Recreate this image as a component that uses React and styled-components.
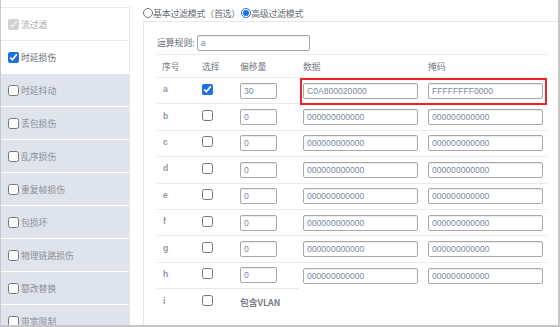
import React from "react";
import styled, { createGlobalStyle } from "styled-components";

const Global = createGlobalStyle`
  html, body { margin: 0; padding: 0; background: #fff; }
  body { font-family: "Liberation Sans", "Noto Sans CJK SC", sans-serif; }
  * { box-sizing: border-box; }
`;

const Frame = styled.div`
  width: 560px;
  height: 327px;
  display: flex;
  border-left: 1px solid #c8c8c8;
  border-right: 2px solid #c6c6c6;
  border-bottom: 2px solid #c6c6c6;
  overflow: hidden;
  background: #fff;
`;

const Sidebar = styled.div`
  width: 129px;
  flex: none;
  margin-top: 7px;
  border-top: 1px solid #ececec;
  border-right: 1px solid #e8e8e8;
  display: flex;
  flex-direction: column;
`;

const SideItem = styled.label`
  flex: none;
  height: 33px;
  display: flex;
  align-items: center;
  gap: 2px;
  padding-left: 7px;
  background: ${(p) => (p.$active ? "#ffffff" : "#dfe3eb")};
  border-bottom: 1px solid ${(p) => (p.$plain ? "#ececec" : "#ffffff")};
  color: ${(p) => (p.$disabled ? "#aaaaaa" : p.$active ? "#666a72" : "#8a8f98")};
  font-family: "Noto Sans CJK SC", sans-serif;
  font-size: 8.8px;
`;

const Check = styled.input.attrs({ type: "checkbox" })`
  width: 11px;
  height: 11px;
  margin: 0;
  accent-color: #1d6fe3;
  flex: none;
`;

const Main = styled.div`
  flex: 1;
  display: flex;
  flex-direction: column;
  padding-left: 13px;
  min-width: 0;
`;

const ModeRow = styled.div`
  height: 21px;
  display: flex;
  align-items: center;
  padding-top: 5px;
  font-family: "Noto Sans CJK SC", sans-serif;
  font-size: 9px;
  letter-spacing: -0.3px;
  color: #6a6e76;
`;

const ModeOption = styled.label`
  display: flex;
  align-items: center;
  margin-right: 1px;
`;

const Radio = styled.input.attrs({ type: "radio" })`
  width: 10px;
  height: 10px;
  margin: 0;
  accent-color: #1d6fe3;
`;

const Panel = styled.div`
  flex: 1;
  border: 1px solid #e6e6e6;
  border-right: none;
  border-bottom: none;
  padding: 12px 10px 0 13px;
`;

const RuleRow = styled.div`
  display: flex;
  align-items: center;
  gap: 2px;
  height: 17px;
  font-family: "Noto Sans CJK SC", sans-serif;
  font-size: 8.8px;
  color: #6a6e76;
`;

const Field = styled.input`
  width: ${(p) => p.$w}px;
  height: 16px;
  margin: 0;
  padding: 0 3px;
  border: 1px solid #a8a8a8;
  border-radius: 2px;
  box-shadow: inset 0 1px 1px rgba(0, 0, 0, 0.08);
  font-family: "Liberation Sans", sans-serif;
  font-size: 8.6px;
  color: #7a88a3;
  background: #fff;
  outline: none;
`;

const Table = styled.table`
  margin-top: 3px;
  width: 390px;
  border-collapse: collapse;
  table-layout: fixed;
  font-family: "Noto Sans CJK SC", sans-serif;
  font-size: 8.8px;
`;

const Col = styled.col`
  width: ${(p) => p.$w}px;
`;

const Th = styled.th`
  height: 23px;
  padding: 0 0 0 5px;
  text-align: left;
  font-weight: normal;
  color: #777b83;
  border-top: 1px solid #ebebeb;
`;

const Td = styled.td`
  height: 26.4px;
  padding: 0 0 0 5px;
  vertical-align: middle;
  border-top: ${(p) => (p.$noLine ? "none" : "1px solid #e9e9e9")};
  position: ${(p) => (p.$mark ? "relative" : "static")};
`;

const Letter = styled.span`
  font-family: "Liberation Sans", sans-serif;
  font-weight: bold;
  font-size: 8.6px;
  color: #8f98a9;
  position: relative;
  top: -2px;
  padding-left: 1px;
`;

const Vlan = styled.span`
  font-weight: bold;
  color: #7a7e86;
  font-size: 8.8px;
`;

const Highlight = styled.div`
  position: absolute;
  left: 2px;
  top: 0;
  width: 247px;
  height: 27px;
  border: 2px solid #e8262b;
  pointer-events: none;
`;

const sideItems = [
  "时延抖动",
  "丢包损伤",
  "乱序损伤",
  "重复帧损伤",
  "包损坏",
  "物理链路损伤",
  "篡改替换",
  "带宽限制",
];

const rows = ["b", "c", "d", "e", "f", "g", "h"];

export default function App() {
  return (
    <>
      <Global />
      <Frame>
        <Sidebar>
          <SideItem $active $plain $disabled>
            <Check defaultChecked disabled />
            流过滤
          </SideItem>
          <SideItem $active>
            <Check defaultChecked />
            时延损伤
          </SideItem>
          {sideItems.map((s) => (
            <SideItem key={s}>
              <Check />
              {s}
            </SideItem>
          ))}
        </Sidebar>
        <Main>
          <ModeRow>
            <ModeOption>
              <Radio name="mode" />
              基本过滤模式（首选）
            </ModeOption>
            <ModeOption>
              <Radio name="mode" defaultChecked />
              高级过滤模式
            </ModeOption>
          </ModeRow>
          <Panel>
            <RuleRow>
              运算规则:
              <Field $w={113} defaultValue="a" />
            </RuleRow>
            <Table>
              <colgroup>
                <Col $w={40} />
                <Col $w={38} />
                <Col $w={63} />
                <Col $w={125} />
                <Col $w={124} />
              </colgroup>
              <thead>
                <tr>
                  <Th>序号</Th>
                  <Th>选择</Th>
                  <Th>偏移量</Th>
                  <Th>数据</Th>
                  <Th>掩码</Th>
                </tr>
              </thead>
              <tbody>
                <tr>
                  <Td><Letter>a</Letter></Td>
                  <Td><Check defaultChecked /></Td>
                  <Td><Field $w={37} defaultValue="30" /></Td>
                  <Td $mark>
                    <Field $w={115} defaultValue="C0A800020000" />
                    <Highlight />
                  </Td>
                  <Td><Field $w={115} defaultValue="FFFFFFFF0000" /></Td>
                </tr>
                {rows.map((r) => (
                  <tr key={r}>
                    <Td><Letter>{r}</Letter></Td>
                    <Td><Check /></Td>
                    <Td><Field $w={37} defaultValue="0" /></Td>
                    <Td><Field $w={115} defaultValue="000000000000" /></Td>
                    <Td><Field $w={115} defaultValue="000000000000" /></Td>
                  </tr>
                ))}
                <tr>
                  <Td><Letter>i</Letter></Td>
                  <Td><Check /></Td>
                  <Td><Vlan>包含VLAN</Vlan></Td>
                  <Td $noLine />
                  <Td $noLine />
                </tr>
              </tbody>
            </Table>
          </Panel>
        </Main>
      </Frame>
    </>
  );
}
